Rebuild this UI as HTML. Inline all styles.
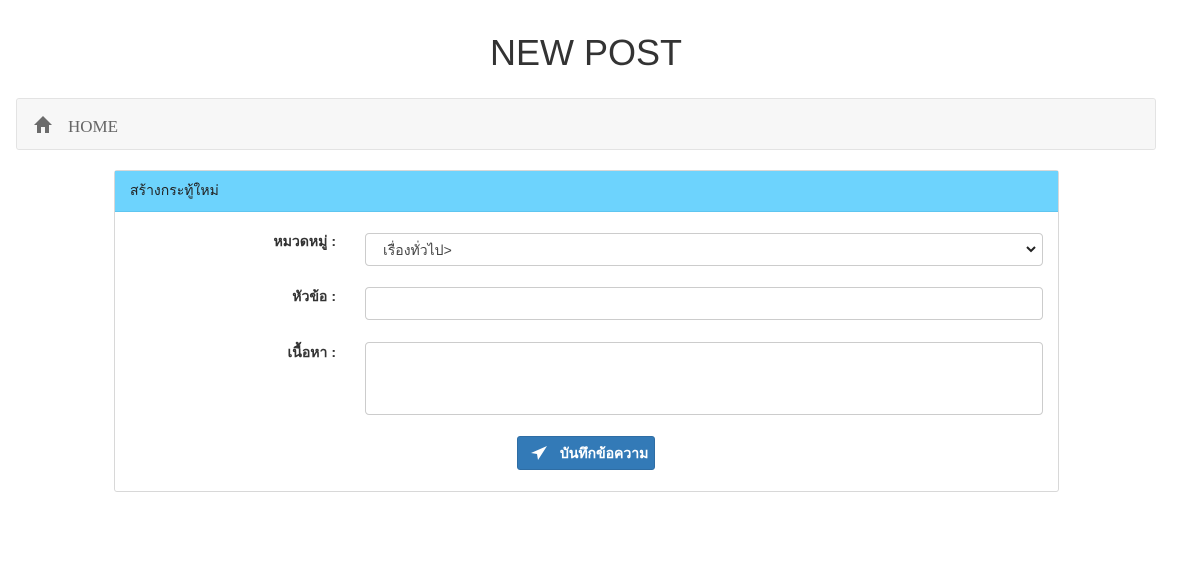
<!DOCTYPE html>
<html><head><meta charset="utf-8"><style>
body{margin:0;background:#fff;font-family:"Liberation Sans",Tahoma,sans-serif;color:#333;font-size:14px;}
h1{position:absolute;top:33px;left:0;width:1172px;text-align:center;margin:0;font-weight:normal;font-size:36px;line-height:40px;color:#333;}
.bc{position:absolute;left:16px;top:98px;width:1138px;height:50px;background:#f7f7f7;border:1px solid #e3e3e3;border-radius:3px;}
.bc svg{position:absolute;left:16px;top:16px}
.bc span{position:absolute;left:51px;top:18px;font-family:"Liberation Serif",serif;font-size:17px;color:#666}
.panel{position:absolute;left:114px;top:170px;width:943px;height:320px;border:1px solid #d8d8d8;border-radius:3px;}
.ph{height:40px;background:#6dd3fd;border-bottom:1px solid #5fc6f0;padding-left:15px;line-height:38px;font-size:14px;color:#222}
.lbl{position:absolute;right:722px;font-weight:bold;font-size:14px;color:#333}
.in{position:absolute;left:250px;width:676px;border:1px solid #ccc;border-radius:4px;background:#fff;}
.btn{position:absolute;left:402px;top:265px;width:136px;height:32px;background:#337ab7;border:1px solid #2e6da4;border-radius:3px;color:#fff;font-weight:bold;font-size:14px;}
</style></head><body>
<h1>NEW POST</h1>
<div class="bc"><svg width="20" height="18" viewBox="0 0 20 18"><path d="M10 1 L1 10 H4 V18 H8 V12 H12 V18 H16 V10 H19 Z" fill="#6b6b6b"/></svg><span>HOME</span></div>
<div class="panel">
<div class="ph">สร้างกระทู้ใหม่</div>
<div class="lbl" style="top:60px">หมวดหมู่ :</div>
<div class="in" style="top:62px;height:31px"><span style="position:absolute;left:17px;top:6px;color:#444">เรื่องทั่วไป&gt;</span>
<svg style="position:absolute;right:6px;top:11px" width="10" height="8" viewBox="0 0 10 8"><path d="M1 2 L5 6 L9 2" stroke="#222" stroke-width="2" fill="none"/></svg></div>
<div class="lbl" style="top:115px">หัวข้อ :</div>
<div class="in" style="top:116px;height:31px"></div>
<div class="lbl" style="top:171px">เนื้อหา :</div>
<div class="in" style="top:171px;height:71px"></div>
<div class="btn"><svg style="position:absolute;left:12px;top:8px" width="18" height="16" viewBox="0 0 18 16"><path d="M17 1 L1 8 L7 9 L8 15 Z" fill="#fff"/></svg><span style="position:absolute;left:42px;top:6px">บันทึกข้อความ</span></div>
</div>
</body></html>
